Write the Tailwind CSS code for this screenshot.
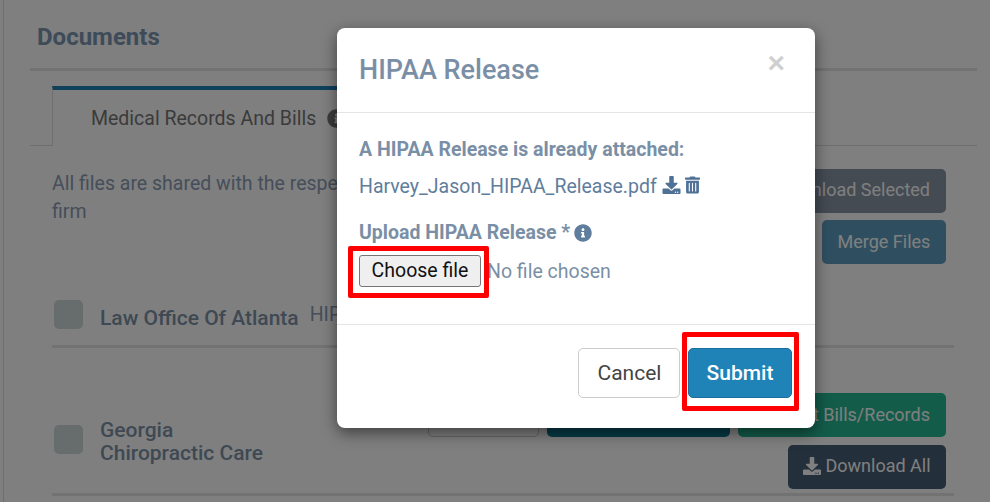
<!DOCTYPE html>
<html lang="en">
<head>
    <meta charset="UTF-8">
    <meta name="viewport" content="width=device-width, initial-scale=1.0">
    <title>HIPAA Release</title>
    <script src="https://cdn.jsdelivr.net/npm/@tailwindcss/browser@4"></script>
</head>
<body class="bg-white font-['Roboto',sans-serif] h-[502px] w-[990px] overflow-hidden relative">
    <!-- page behind the modal -->
    <div class="h-[502px] ml-[3px] border-l border-[#ddd] pl-[26px] pr-[13px]">
        <h2 class="text-[24px] leading-[26px] font-bold text-[#7d96b3] pl-[7px] pt-[24px] pb-[18px] border-b-[3px] border-[#e4e4e4]">Documents</h2>

        <div class="flex mt-[15px] border-b border-[#ddd] h-[60px]">
            <div class="ml-[22px] pl-[38px] pr-[20px] w-[400px] h-[60px] bg-white border-t-[4px] border-t-[#1f83b7] border-l border-l-[#ddd] flex items-center gap-[11px] text-[19.5px] text-[#777] pt-[1px]">
                <span>Medical Records And Bills</span>
                <svg class="w-[19px] h-[19px] fill-[#777]" viewBox="0 0 512 512"><path d="M256 8C119.043 8 8 119.083 8 256c0 136.997 111.043 248 248 248s248-111.003 248-248C504 119.083 392.957 8 256 8zm0 110c23.196 0 42 18.804 42 42s-18.804 42-42 42-42-18.804-42-42 18.804-42 42-42zm56 254c0 6.627-5.373 12-12 12h-88c-6.627 0-12-5.373-12-12v-24c0-6.627 5.373-12 12-12h12v-64h-12c-6.627 0-12-5.373-12-12v-24c0-6.627 5.373-12 12-12h64c6.627 0 12 5.373 12 12v100h12c6.627 0 12 5.373 12 12v24z"/></svg>
            </div>
        </div>

        <div class="flex justify-between pl-[22px] pr-[31px] pt-[23px]">
            <p class="text-[19.5px] leading-[28px] text-[#8a9db5] pt-[1px]">All files are shared with the respective law<br>firm</p>
            <div class="flex flex-col items-end gap-[7px]">
                <button class="h-[44px] px-[16px] pb-[3px] rounded-[5px] bg-[#8a96a6] text-white text-[18px]">Download Selected</button>
                <button class="h-[44px] w-[124px] pb-[2px] rounded-[5px] bg-[#5f9fc2] text-white text-[18px]">Merge Files</button>
            </div>
        </div>

        <div class="flex items-center ml-[22px] mr-[23px] mt-[24px] h-[60px] border-b-[3px] border-[#e4e4e4] pb-[5px]">
            <span class="w-[29px] h-[29px] ml-[2px] rounded-[5px] bg-[#cfd8d8]"></span>
            <span class="ml-[17px] text-[21px] font-medium text-[#7d92a8] pt-[10px]">Law Office Of Atlanta</span>
            <span class="ml-[11px] text-[19.5px] text-[#8a9db5] pt-[2px]">HIPAA</span>
        </div>

        <div class="flex items-center ml-[22px] mr-[23px] mt-[45px] h-[103px] border-b-[3px] border-[#e4e4e4] relative">
            <span class="w-[29px] h-[29px] ml-[2px] rounded-[5px] bg-[#cfd8d8] mt-[-8px]"></span>
            <span class="ml-[17px] text-[21px] leading-[23px] font-medium text-[#7d92a8] mt-[-3px]">Georgia<br>Chiropractic Care</span>
            <div class="ml-auto mr-[8px] flex flex-col items-end gap-[8px] mt-[-5px]">
                <div class="flex gap-[8px]">
                    <button class="h-[44px] w-[111px] rounded-[5px] border border-[#ccc] bg-white text-[18px] text-[#555]">View</button>
                    <button class="h-[44px] w-[183px] rounded-[5px] bg-[#0c768e] text-white text-[18px]">Request</button>
                    <button class="h-[44px] w-[208px] rounded-[5px] bg-[#26b894] text-white text-[18px] text-right pr-[16px]">Request Bills/Records</button>
                </div>
                <button class="h-[44px] w-[158px] pb-[2px] rounded-[5px] bg-[#475e74] text-white text-[18px] flex items-center justify-center gap-[4px]">
                    <svg class="w-[18px] h-[18px] fill-white" viewBox="0 0 512 512"><path d="M216 0h80c13.3 0 24 10.7 24 24v168h87.7c17.8 0 26.7 21.5 14.1 34.1L269.7 378.3c-7.5 7.5-19.8 7.5-27.3 0L90.1 226.1c-12.6-12.6-3.7-34.1 14.1-34.1H192V24c0-13.3 10.7-24 24-24zm296 376v112c0 13.3-10.7 24-24 24H24c-13.3 0-24-10.7-24-24V376c0-13.3 10.7-24 24-24h146.7l49 49c20.1 20.1 52.5 20.1 72.6 0l49-49H488c13.3 0 24 10.7 24 24zm-124 88c0-11-9-20-20-20s-20 9-20 20 9 20 20 20 20-9 20-20zm64 0c0-11-9-20-20-20s-20 9-20 20 9 20 20 20 20-9 20-20z"/></svg>
                    Download All
                </button>
            </div>
        </div>
    </div>

    <!-- backdrop + modal -->
    <div class="absolute inset-0 bg-black/50">
        <div class="relative ml-[337px] mt-[28px] w-[478px] h-[400px] bg-white rounded-[8px] shadow-[0_5px_15px_rgba(0,0,0,0.5)] flex flex-col">
            <div class="h-[85px] border-b border-[#e5e5e5] flex justify-between pl-[22px] pr-[30px]">
                <h3 class="text-[27px] leading-[32px] font-medium text-[#7a8fa6] pt-[26px]">HIPAA Release</h3>
                <span class="text-[#cfcfcf] text-[30px] leading-[30px] font-bold font-['Liberation_Sans',sans-serif] pt-[20px]">×</span>
            </div>
            <div class="h-[212px] border-b border-[#e5e5e5] pl-[22px]">
                <p class="text-[19.5px] leading-[26px] font-bold text-[#7a8fa6] pt-[24px]">A HIPAA Release is already attached:</p>
                <div class="flex items-center gap-[5px] mt-[12px] h-[24px] text-[19.5px] text-[#5f7d9c]">
                    <span>Harvey_Jason_HIPAA_Release.pdf</span>
                    <svg class="w-[19px] h-[18px] fill-[#4f7196] mt-[-5px]" viewBox="0 0 512 512"><path d="M216 0h80c13.3 0 24 10.7 24 24v168h87.7c17.8 0 26.7 21.5 14.1 34.1L269.7 378.3c-7.5 7.5-19.8 7.5-27.3 0L90.1 226.1c-12.6-12.6-3.7-34.1 14.1-34.1H192V24c0-13.3 10.7-24 24-24zm296 376v112c0 13.3-10.7 24-24 24H24c-13.3 0-24-10.7-24-24V376c0-13.3 10.7-24 24-24h146.7l49 49c20.1 20.1 52.5 20.1 72.6 0l49-49H488c13.3 0 24 10.7 24 24zm-124 88c0-11-9-20-20-20s-20 9-20 20 9 20 20 20 20-9 20-20zm64 0c0-11-9-20-20-20s-20 9-20 20 9 20 20 20 20-9 20-20z"/></svg>
                    <svg class="w-[15px] h-[18px] fill-[#4f7196] mt-[-4px] ml-[-1px]" viewBox="0 0 448 512"><path d="M32 464a48 48 0 0 0 48 48h288a48 48 0 0 0 48-48V128H32zm272-256a16 16 0 0 1 32 0v224a16 16 0 0 1-32 0zm-96 0a16 16 0 0 1 32 0v224a16 16 0 0 1-32 0zm-96 0a16 16 0 0 1 32 0v224a16 16 0 0 1-32 0zM432 32H312l-9.4-18.7A24 24 0 0 0 281.1 0H166.8a23.72 23.72 0 0 0-21.4 13.3L136 32H16A16 16 0 0 0 0 48v32a16 16 0 0 0 16 16h416a16 16 0 0 0 16-16V48a16 16 0 0 0-16-16z"/></svg>
                </div>
                <div class="flex items-center gap-[4px] mt-[22px] h-[24px] text-[19.5px] font-bold text-[#7a8fa6]">
                    <span>Upload HIPAA Release *</span>
                    <svg class="w-[18px] h-[18px] fill-[#5f7d9c]" viewBox="0 0 512 512"><path d="M256 8C119.043 8 8 119.083 8 256c0 136.997 111.043 248 248 248s248-111.003 248-248C504 119.083 392.957 8 256 8zm0 110c23.196 0 42 18.804 42 42s-18.804 42-42 42-42-18.804-42-42 18.804-42 42-42zm56 254c0 6.627-5.373 12-12 12h-88c-6.627 0-12-5.373-12-12v-24c0-6.627 5.373-12 12-12h12v-64h-12c-6.627 0-12-5.373-12-12v-24c0-6.627 5.373-12 12-12h64c6.627 0 12 5.373 12 12v100h12c6.627 0 12 5.373 12 12v24z"/></svg>
                </div>
                <div class="flex items-center gap-[6px] mt-[10px] text-[19.5px] text-[#7a8fa6]">
                    <button class="h-[32px] w-[122px] text-[19.5px] leading-[26px] text-[#111] bg-[#efefef] border border-[#767676] rounded-[3px]">Choose file</button>
                    <span class="pt-[2px]">No file chosen</span>
                </div>
            </div>
            <div class="flex justify-end gap-[8px] pt-[23px] pr-[23px]">
                <button class="w-[102px] h-[50px] pt-[1px] pl-[1px] rounded-[5px] border border-[#ccc] bg-white text-[21px] text-[#444]">Cancel</button>
                <button class="w-[104px] h-[50px] pt-[1px] rounded-[5px] border border-[#1a6f9e] bg-[#1f83b7] text-white text-[21px] font-medium">Submit</button>
            </div>

            <!-- red annotation boxes from the screenshot -->
            <div class="absolute left-[11px] top-[218px] w-[141px] h-[52px] border-[5px] border-[#ff0000] rounded-[2px]"></div>
            <div class="absolute left-[345px] top-[304px] w-[117px] h-[79px] border-[5px] border-[#ff0000] rounded-[2px]"></div>
        </div>
    </div>
</body>
</html>
